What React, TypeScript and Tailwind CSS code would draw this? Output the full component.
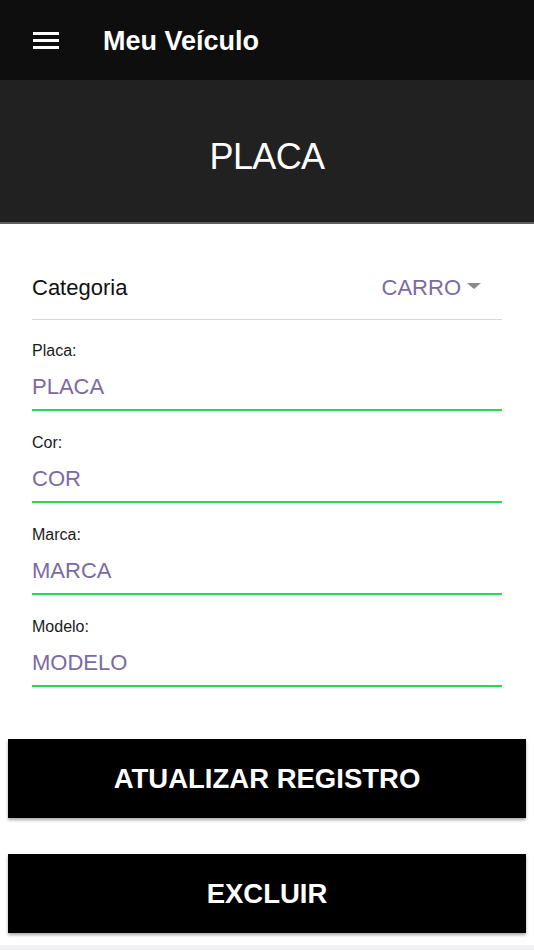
import React from "react";

const fields = [
  { label: "Placa:", value: "PLACA" },
  { label: "Cor:", value: "COR" },
  { label: "Marca:", value: "MARCA" },
  { label: "Modelo:", value: "MODELO" },
];

export default function App() {
  return (
    <div
      className="w-[534px] min-h-[950px] bg-white flex flex-col"
      style={{ fontFamily: '"Liberation Sans", Arial, Helvetica, sans-serif' }}
    >
      <header className="h-20 bg-[#0e0e0e] flex items-center pl-[33px]">
        <div className="flex flex-col gap-[4px] w-[26px]">
          <span className="block h-[3px] bg-white" />
          <span className="block h-[3px] bg-white" />
          <span className="block h-[3px] bg-white" />
        </div>
        <h1 className="ml-[44px] text-white text-[27px] font-bold leading-none pt-[2px]">
          Meu Veículo
        </h1>
      </header>

      <div className="h-[144px] bg-[#212121] border-b-2 border-[#5c5c5c] flex items-center justify-center pt-3">
        <span className="text-white text-[36px] tracking-[-0.6px] leading-none">PLACA</span>
      </div>

      <div className="px-8 pt-[51px]">
        <div className="flex items-center justify-between pb-[18px] border-b border-[#d8d8d8]">
          <span className="text-[22px] leading-[26px] text-[#111]">Categoria</span>
          <div className="flex items-center mr-[21px]">
            <span className="text-[22px] leading-[26px] text-[#7b6aa5]">CARRO</span>
            <span className="ml-[6px] mb-[4px] w-0 h-0 border-l-[7px] border-r-[7px] border-t-[6px] border-l-transparent border-r-transparent border-t-[#8a8a8a]" />
          </div>
        </div>

        <div className="flex flex-col gap-[23px] mt-[22px]">
          {fields.map((f) => (
            <div key={f.label} className="flex flex-col pb-[9px] border-b-2 border-[#25d957]">
              <span className="text-[16px] leading-[18px] text-[#1a1a1a]">{f.label}</span>
              <span className="mt-[14px] text-[22px] leading-[26px] text-[#7b6aa5]">{f.value}</span>
            </div>
          ))}
        </div>
      </div>

      <div className="px-2 mt-[52px] flex flex-col gap-[36px]">
        <button className="h-[79px] w-full bg-black text-white text-[27.5px] font-bold shadow-[0_2px_3px_rgba(0,0,0,0.35)]">
          ATUALIZAR REGISTRO
        </button>
        <button className="h-[79px] w-full bg-black text-white text-[27.5px] font-bold shadow-[0_2px_3px_rgba(0,0,0,0.35)]">
          EXCLUIR
        </button>
      </div>

      <div className="mt-[12px] flex-1 bg-[#f1f1f4]" />
    </div>
  );
}
